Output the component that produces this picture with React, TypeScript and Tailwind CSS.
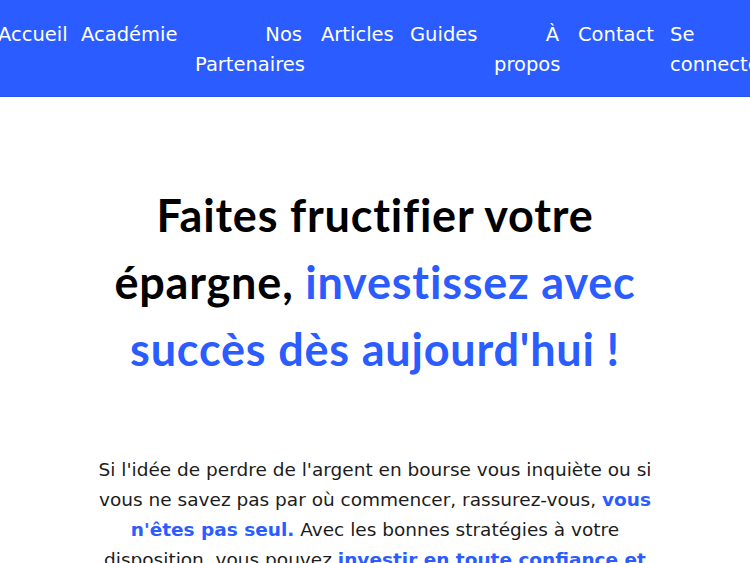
import React from 'react';

const navItems = [
  { label: 'Accueil', w: 'w-[64px]' },
  { label: 'Académie', w: 'w-[95px]' },
  { label: 'Nos Partenaires', w: 'w-[107px]' },
  { label: 'Articles', w: 'w-[70px]' },
  { label: 'Guides', w: 'w-[65px]' },
  { label: 'À propos', w: 'w-[65px]' },
  { label: 'Contact', w: 'w-[73px]' },
];

const App: React.FC = () => {
  return (
    <div className="min-h-screen overflow-x-hidden bg-white">
      <header className="h-[97px] bg-[#2b5cff] border-b border-[#2554ee]">
        <ul className="flex gap-[19px] ml-[-2px] pt-[20px] text-[19.5px] leading-[30px] text-white font-['DejaVu_Sans',sans-serif]">
          {navItems.map((item) => (
            <li key={item.label} className={`${item.w} shrink-0 text-right`}>
              {item.label}
            </li>
          ))}
          <li className="w-[82px] shrink-0 text-left">Se connecter</li>
        </ul>
      </header>

      <main className="flex flex-col items-center px-6">
        <h1 className="mt-[85px] max-w-[560px] text-center text-[45px] leading-[67px] tracking-[0.8px] font-bold text-black font-['Lato',sans-serif]">
          Faites fructifier votre épargne,{' '}
          <span className="text-[#2b5cff]">investissez avec succès dès aujourd'hui !</span>
        </h1>

        <p className="mt-[72px] max-w-[570px] text-center text-[18.5px] leading-[30px] text-[#1c1c1c] font-['DejaVu_Sans',sans-serif]">
          Si l'idée de perdre de l'argent en bourse vous inquiète ou si vous ne savez pas par où
          commencer, rassurez-vous,{' '}
          <strong className="font-bold text-[#2b5cff]">vous n'êtes pas seul.</strong> Avec les
          bonnes stratégies à votre disposition, vous pouvez{' '}
          <strong className="font-bold text-[#2b5cff]">investir en toute confiance et</strong>{' '}
          faire fructifier votre épargne sur le long terme.
        </p>
      </main>
    </div>
  );
};

export default App;
